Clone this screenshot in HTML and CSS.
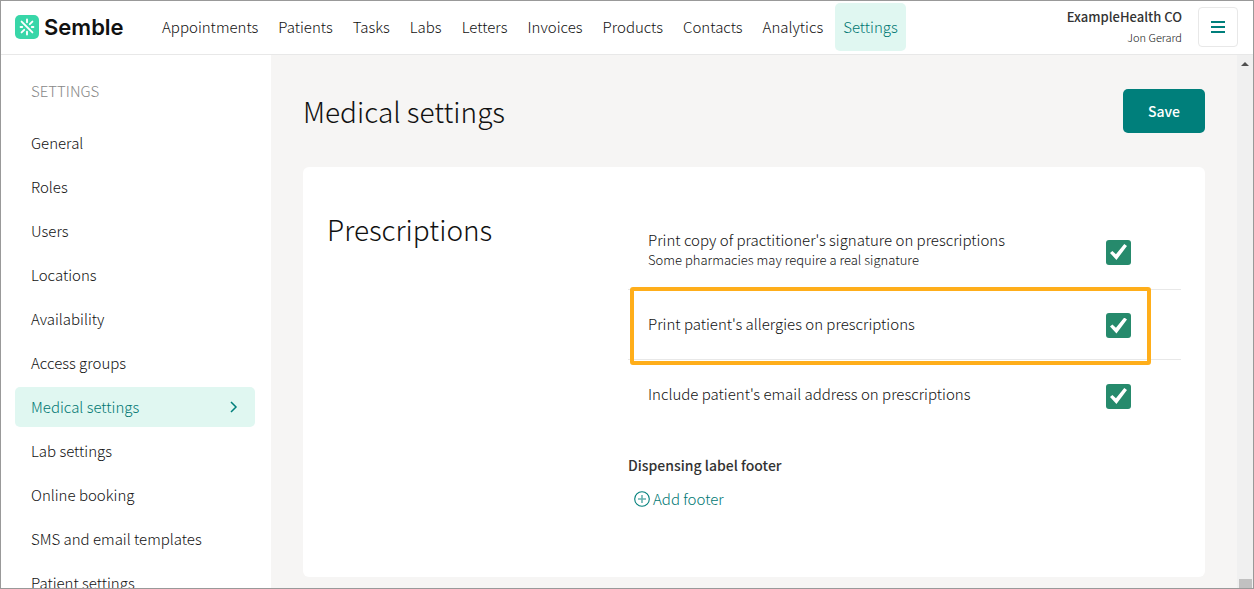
FILE: index.html
```html
<!DOCTYPE html>
<html lang="en">
<head>
    <meta charset="UTF-8">
    <meta name="viewport" content="width=device-width, initial-scale=1.0">
    <title>Medical settings - Semble</title>
    <link rel="stylesheet" href="styles.css">
</head>
<body>

    <header class="topbar">
        <a href="#" class="logo">
            <svg class="logo-mark" viewBox="0 0 24 24">
                <rect width="24" height="24" rx="5" fill="#38d6a8"></rect>
                <g stroke="#fff" stroke-width="1.9" stroke-linecap="round">
                    <path d="M6.6 6.6l10.8 10.8"></path>
                    <path d="M12 4.4v2.8M12 16.8v2.8M5.6 12h1.6M16.8 12h1.6M17.4 6.6l-2.6 2.6M9.2 14.8l-2.6 2.6"></path>
                </g>
            </svg>
            <span>Semble</span>
        </a>
        <nav class="main-nav">
            <a href="#">Appointments</a>
            <a href="#">Patients</a>
            <a href="#">Tasks</a>
            <a href="#">Labs</a>
            <a href="#">Letters</a>
            <a href="#">Invoices</a>
            <a href="#">Products</a>
            <a href="#">Contacts</a>
            <a href="#">Analytics</a>
            <a href="#" class="active">Settings</a>
        </nav>
        <div class="account">
            <div class="account-practice">ExampleHealth CO</div>
            <div class="account-user">Jon Gerard</div>
        </div>
        <button type="button" class="menu-button" aria-label="Menu">
            <svg viewBox="0 0 14 12">
                <path d="M0 1h14M0 6h14M0 11h14" stroke="#007f7b" stroke-width="2"></path>
            </svg>
        </button>
    </header>

    <div class="layout">
        <aside class="sidebar">
            <h2 class="sidebar-title">SETTINGS</h2>
            <nav class="side-nav">
                <a href="#">General</a>
                <a href="#">Roles</a>
                <a href="#">Users</a>
                <a href="#">Locations</a>
                <a href="#">Availability</a>
                <a href="#">Access groups</a>
                <a href="#" class="active">
                    Medical settings
                    <svg class="chevron" viewBox="0 0 10 12">
                        <path d="M2 1l5 5-5 5" fill="none" stroke="#007f7b" stroke-width="1.5"></path>
                    </svg>
                </a>
                <a href="#">Lab settings</a>
                <a href="#">Online booking</a>
                <a href="#">SMS and email templates</a>
                <a href="#">Patient settings</a>
            </nav>
        </aside>

        <main class="content">
            <div class="page-header">
                <h1>Medical settings</h1>
                <button type="submit" class="save-button">Save</button>
            </div>

            <section class="card">
                <h2>Prescriptions</h2>
                <div class="card-body">
                    <div class="option">
                        <label for="printSignature">
                            Print copy of practitioner's signature on prescriptions
                            <small>Some pharmacies may require a real signature</small>
                        </label>
                        <input type="checkbox" id="printSignature" checked>
                    </div>
                    <div class="option highlighted">
                        <label for="printAllergies">Print patient's allergies on prescriptions</label>
                        <input type="checkbox" id="printAllergies" checked>
                    </div>
                    <div class="option">
                        <label for="includeEmail">Include patient's email address on prescriptions</label>
                        <input type="checkbox" id="includeEmail" checked>
                    </div>

                    <h3>Dispensing label footer</h3>
                    <button type="button" class="add-button">
                        <svg viewBox="0 0 16 16" fill="none" stroke="#007f7b">
                            <circle cx="8" cy="8" r="7.3" stroke-width="1.1"></circle>
                            <path d="M8 4v8M4 8h8" stroke-width="1.6" opacity="0.6"></path>
                        </svg>
                        Add footer
                    </button>
                </div>
            </section>
        </main>

        <div class="scroll-track">
            <svg class="scroll-arrow" viewBox="0 0 8 4">
                <path d="M0 4l4-4 4 4z" fill="#505050"></path>
            </svg>
            <div class="scroll-thumb"></div>
        </div>
    </div>

</body>
</html>
```

FILE: styles.css
```css
* {
    box-sizing: border-box;
}

body {
    display: flex;
    flex-direction: column;
    height: 100vh;
    margin: 0;
    border: 1px solid #999;
    overflow: hidden;
    background-color: #fff;
    color: #111;
    font-family: "Noto Sans CJK SC", "Open Sans", sans-serif;
    font-size: 15px;
    font-weight: 300;
    line-height: 20px;
}

h1, h2, h3 {
    margin: 0;
    font-weight: 300;
}

a {
    color: inherit;
    text-decoration: none;
}

button {
    font-family: inherit;
    font-size: inherit;
    font-weight: inherit;
    line-height: inherit;
    cursor: pointer;
}

/* Top bar */
.topbar {
    display: flex;
    flex: none;
    align-items: center;
    height: 54px;
    padding: 0 15px 2px 14px;
    border-bottom: 1px solid #e8e8e8;
}

.logo {
    display: flex;
    align-items: center;
    gap: 5px;
    width: 139px;
    font-family: Inter, sans-serif;
    font-size: 22px;
    font-weight: 600;
}

.logo-mark {
    width: 24px;
    height: 24px;
}

.main-nav {
    display: flex;
    gap: 4px;
}

.main-nav a {
    padding: 14px 8px;
    border-radius: 5px;
}

.main-nav .active,
.side-nav .active {
    background-color: #e0f7f1;
    color: #007773;
}

.account {
    margin-left: auto;
    margin-right: 16px;
    text-align: right;
}

.account-practice {
    color: #333;
    font-size: 13px;
    font-weight: 500;
}

.account-user {
    font-size: 11px;
}

.menu-button {
    display: flex;
    align-items: center;
    justify-content: center;
    width: 40px;
    height: 40px;
    padding: 0;
    border: 1px solid #e8e8e8;
    border-radius: 4px;
    background-color: #fff;
}

.menu-button svg {
    width: 14px;
    height: 12px;
}

.layout {
    display: flex;
    flex: 1;
    min-height: 0;
}

/* Sidebar */
.sidebar {
    flex: none;
    width: 270px;
    padding: 26px 16px 0 14px;
    overflow: hidden;
}

.sidebar-title {
    padding: 0 16px;
    margin-bottom: 22px;
    color: #888;
    font-size: 15px;
}

.side-nav {
    display: flex;
    flex-direction: column;
    gap: 4px;
}

.side-nav a {
    display: flex;
    align-items: center;
    justify-content: space-between;
    padding: 10px 16px;
    border-radius: 5px;
}

.chevron {
    width: 10px;
    height: 12px;
}

/* Content */
.content {
    flex: 1;
    min-width: 0;
    padding: 34px 32px 0;
    overflow: hidden;
    background-color: #f6f5f4;
}

.page-header {
    display: flex;
    align-items: center;
    justify-content: space-between;
    margin-bottom: 34px;
}

.page-header h1,
.card h2 {
    font-size: 28px;
    line-height: 38px;
}

.save-button {
    padding: 12px 25px;
    border: none;
    border-radius: 5px;
    background-color: #007f7b;
    color: #fff;
    font-size: 14px;
    font-weight: 500;
}

.card {
    display: grid;
    grid-template-columns: 301px 1fr;
    padding: 43px 24px 68px;
    border-radius: 6px;
    background-color: #fff;
}

.option {
    position: relative;
    display: flex;
    align-items: center;
    justify-content: space-between;
    min-height: 70px;
    padding: 16px 50px 16px 20px;
    border-bottom: 1px solid #e8e8e8;
}

.option:first-child {
    padding: 20px 50px 17px 20px;
}

.option:nth-child(3) {
    border-bottom: none;
}

.option label {
    padding-bottom: 2px;
}

.option small {
    display: block;
    font-size: 13px;
}

.option input {
    appearance: none;
    display: grid;
    place-items: center;
    width: 25px;
    height: 25px;
    margin: 2px 0 0;
    border-radius: 3px;
    background-color: #268a6c;
}

.option input:checked::before {
    content: "";
    width: 17px;
    height: 16px;
    background-color: #fff;
    clip-path: polygon(0 56%, 14% 44%, 35% 64%, 84% 0, 100% 12%, 38% 100%);
}

.highlighted::after {
    content: "";
    position: absolute;
    top: -3px;
    right: 30px;
    bottom: -6px;
    left: 2px;
    border: 4px solid #ffae1a;
    border-radius: 3px;
    pointer-events: none;
}

.card h3 {
    margin-top: 25px;
    color: #333;
    font-size: 14px;
    font-weight: 500;
}

.add-button {
    display: flex;
    align-items: center;
    gap: 3px;
    margin-top: 14px;
    padding: 0 6px;
    border: none;
    background: none;
    color: #007773;
}

.add-button svg {
    width: 16px;
    height: 16px;
}

/* Scrollbar */
.scroll-track {
    display: flex;
    flex: none;
    flex-direction: column;
    align-items: center;
    justify-content: space-between;
    width: 16px;
    padding-top: 7px;
    background-color: #f0f0f0;
}

.scroll-arrow {
    width: 8px;
    height: 4px;
}

.scroll-thumb {
    width: 13px;
    height: 9px;
    background-color: #c1c1c1;
}
```
